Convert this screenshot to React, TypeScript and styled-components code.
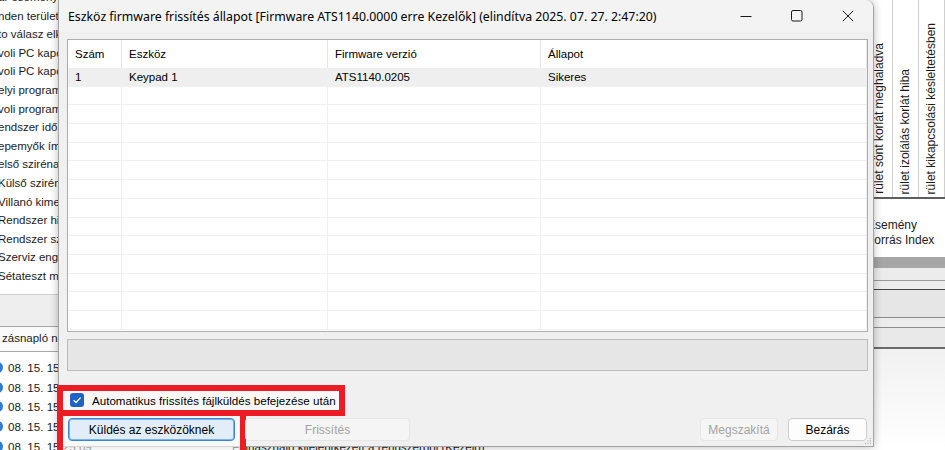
import React from "react";
import styled, { createGlobalStyle } from "styled-components";

const GlobalStyle = createGlobalStyle`
  html, body { margin: 0; padding: 0; }
  body {
    width: 945px; height: 450px; overflow: hidden; background: #fff;
    font-family: "Liberation Sans", Arial, sans-serif; color: #000;
  }
  * { box-sizing: border-box; }
`;

const Stage = styled.div`
  position: relative;
  width: 945px;
  height: 450px;
  overflow: hidden;
  background: #fff;
`;

/* ---------- background application ---------- */
const Backdrop = styled.div`
  display: flex;
  width: 945px;
  height: 450px;
`;

const LeftPane = styled.div`
  width: 600px;
  display: flex;
  flex-direction: column;
`;

const EventList = styled.div`
  height: 295px;
  flex: none;
  overflow: hidden;
  border-bottom: 1px solid #cfcfcf;
`;

const EventRows = styled.div`
  margin-top: -12px;
  margin-left: -2px;
`;

const EventRow = styled.div`
  height: 18.6px;
  line-height: 18.6px;
  font-size: 11.5px;
  color: #1b1b1b;
  white-space: nowrap;
`;

const SplitBand = styled.div`
  height: 31px;
  flex: none;
  background: #eeeeee;
`;

const LogHeader = styled.div`
  height: 26px;
  flex: none;
  border-top: 1px solid #a8a8a8;
  border-bottom: 1px solid #a8a8a8;
  background: #fafafa;
  font-size: 11.5px;
  line-height: 22px;
  padding-left: 2px;
  white-space: nowrap;
  color: #1b1b1b;
`;

const LogRows = styled.div`
  flex: none;
  padding-top: 6px;
`;

const LogRow = styled.div`
  height: 19.6px;
  display: flex;
  align-items: center;
  font-size: 11.6px;
  white-space: nowrap;
  color: #1b1b1b;
`;

const LogIcon = styled.span`
  width: 11px;
  height: 11px;
  border-radius: 50%;
  background: #2f7bd6;
  margin-left: -8px;
  margin-right: 5px;
  flex: none;
`;

const LogDate = styled.span`
  width: 224px;
  flex: none;
`;

const RightPane = styled.div`
  flex: 1;
  display: flex;
  flex-direction: column;
`;

const MatrixHeader = styled.div`
  height: 199px;
  flex: none;
  display: flex;
  justify-content: flex-end;
  border-bottom: 2px solid #5e5e5e;
`;

const VHeader = styled.div`
  width: 26px;
  border-right: 1px solid #cfcfcf;
  display: flex;
  align-items: flex-end;
  justify-content: flex-start;
  padding-left: 5px;
  padding-bottom: 3px;
`;

const VText = styled.span`
  writing-mode: vertical-rl;
  transform: rotate(180deg);
  font-size: 12px;
  line-height: 14px;
  white-space: nowrap;
  color: #1b1b1b;
`;

const Props = styled.div`
  height: 58px;
  flex: none;
  display: flex;
  justify-content: flex-end;
  padding-top: 19px;
`;

const PropsBlock = styled.div`
  width: 78px;
  font-size: 12px;
  line-height: 15px;
  color: #1b1b1b;
  white-space: nowrap;
`;

const Band = styled.div<{ $h: number; $bg: string }>`
  height: ${(p) => p.$h}px;
  background: ${(p) => p.$bg};
  flex: none;
`;

const Fade = styled.div`
  flex: 1;
  background: linear-gradient(#f1f1f1, #ffffff);
`;

/* ---------- dialog window ---------- */
const Dialog = styled.div`
  position: absolute;
  left: 58px;
  top: 0;
  width: 816px;
  height: 447px;
  background: #f0f0f0;
  border: 1px solid #a3a3a3;
  border-top: none;
  border-radius: 0 8px 0 0;
  box-shadow: 0 0 9px rgba(0, 0, 0, 0.28);
  display: flex;
  flex-direction: column;
`;

const TitleBar = styled.div`
  height: 32px;
  display: flex;
  align-items: center;
  background: #f3f3f3;
  border-radius: 0 8px 0 0;
  flex: none;
`;

const Title = styled.div`
  flex: 1;
  padding-left: 9px;
  font-family: "Noto Sans", "Liberation Sans", sans-serif;
  font-size: 12.3px;
  white-space: nowrap;
  overflow: hidden;
`;

const Caption = styled.div`
  width: 51px;
  height: 32px;
  display: flex;
  align-items: center;
  justify-content: center;
`;

const Body = styled.div`
  flex: 1;
  display: flex;
  flex-direction: column;
  padding: 7px 5px 6px 8px;
`;

const Table = styled.div`
  height: 293px;
  background: #fff;
  border: 1px solid #adadad;
  overflow: hidden;
  flex: none;
`;

const cols = "54px 206px 213px 1fr";

const HeadRow = styled.div`
  display: grid;
  grid-template-columns: ${cols};
  height: 28px;
`;

const HeadCell = styled.div`
  border-right: 1px solid #e5e5e5;
  padding-left: 7px;
  display: flex;
  align-items: center;
  font-size: 11.5px;
  white-space: nowrap;
`;

const Row = styled.div<{ $selected?: boolean }>`
  display: grid;
  grid-template-columns: ${cols};
  height: 18.7px;
  background: ${(p) => (p.$selected ? "#efefef" : "#fff")};
  border-bottom: 1px solid #f0f0f0;
`;

const Cell = styled.div`
  border-right: 1px solid #f0f0f0;
  padding-left: 7px;
  display: flex;
  align-items: center;
  font-size: 11.5px;
  white-space: nowrap;
  overflow: hidden;
`;

const Progress = styled.div`
  margin-top: 7px;
  height: 32px;
  background: #e6e6e6;
  border: 1px solid #bcbcbc;
  flex: none;
`;

const CheckRow = styled.label`
  position: relative;
  z-index: 2;
  margin-top: 22px;
  height: 14px;
  display: flex;
  align-items: center;
  gap: 8px;
  padding-left: 3px;
  font-size: 11.6px;
  white-space: nowrap;
`;

const CheckBox = styled.span`
  width: 14px;
  height: 14px;
  border-radius: 3px;
  background: #1f64c2;
  display: flex;
  align-items: center;
  justify-content: center;
  flex: none;
`;

const ButtonRow = styled.div`
  position: relative;
  z-index: 2;
  margin-top: 11px;
  height: 23px;
  display: flex;
  padding: 0 1px;
  gap: 10px;
`;

const Spacer = styled.div`
  flex: 1;
`;

const Button = styled.button<{ $w: number; $variant: "focus" | "normal" | "disabled" }>`
  width: ${(p) => p.$w}px;
  height: 23px;
  border-radius: 4px;
  font-family: "Liberation Sans", Arial, sans-serif;
  font-size: 12px;
  padding: 0;
  color: ${(p) => (p.$variant === "disabled" ? "#a3a3a3" : "#000")};
  background: ${(p) =>
    p.$variant === "focus" ? "#e1eefa" : p.$variant === "normal" ? "#fdfdfd" : "#f5f5f5"};
  border: 1px solid
    ${(p) => (p.$variant === "focus" ? "#3a86d4" : p.$variant === "normal" ? "#cdcdcd" : "#e6e6e6")};
  box-shadow: ${(p) => (p.$variant === "focus" ? "inset 0 0 0 1px #7fb2e5" : "none")};
`;

const Grip = styled.svg`
  position: absolute;
  right: 1px;
  bottom: 1px;
`;

/* ---------- annotation frames ---------- */
const Frame = styled.div<{ $x: number; $y: number; $w: number; $h: number }>`
  position: absolute;
  z-index: 1;
  left: ${(p) => p.$x}px;
  top: ${(p) => p.$y}px;
  width: ${(p) => p.$w}px;
  height: ${(p) => p.$h}px;
  border: 6px solid #ec1c24;
  background: rgba(255, 255, 255, 0.55);
  pointer-events: none;
`;

const events = [
  "ar eseményei",
  "nden terület",
  "to válasz elküldve",
  "voli PC kapcsolat",
  "voli PC kapcsolat",
  "elyi programozás",
  "voli programozás",
  "endszer idő módosítva",
  "epemyők ímeg",
  "első sziréna aktív",
  "Külső sziréna aktív",
  "Villanó kimenet",
  "Rendszer hiba",
  "Rendszer szabotázs",
  "Szerviz engedélyezve",
  "Sétateszt mód",
];

const logs = [
  ["08. 15. 15:32:41", "Kezelő 1 firmware frissítés elindítva a rendszerben"],
  ["08. 15. 15:31:02", "Felhasználó bejelentkezett a rendszerbe (Kezelő 1)"],
  ["08. 15. 15:29:47", "Távoli PC kapcsolat létrejött a központtal"],
  ["08. 15. 15:27:18", "Rendszer idő módosítva a távoli kapcsolaton"],
  ["08. 15. 15:25:09", "Felhasználó kijelentkezett a rendszerből (Kezelő)"],
];

const vheaders = [
  "rület sönt korlát meghaladva",
  "rület izolálás korlát hiba",
  "rület kikapcsolási késleltetésben",
];

const emptyRows = Array.from({ length: 13 });

export default function App() {
  return (
    <>
      <GlobalStyle />
      <Stage>
        <Backdrop>
          <LeftPane>
            <EventList>
              <EventRows>
                {events.map((e, i) => (
                  <EventRow key={i}>{e}</EventRow>
                ))}
              </EventRows>
            </EventList>
            <SplitBand />
            <LogHeader>zásnapló&nbsp;naplózás</LogHeader>
            <LogRows>
              {logs.map(([d, m], i) => (
                <LogRow key={i}>
                  <LogIcon />
                  <LogDate>{d}</LogDate>
                  <span>{m}</span>
                </LogRow>
              ))}
            </LogRows>
          </LeftPane>
          <RightPane>
            <MatrixHeader>
              {vheaders.map((t, i) => (
                <VHeader key={i}>
                  <VText>{t}</VText>
                </VHeader>
              ))}
            </MatrixHeader>
            <Props>
              <PropsBlock>
                <div>Esemény</div>
                <div>Forrás Index</div>
              </PropsBlock>
            </Props>
            <Band $h={11} $bg="#a6a6a6" />
            <Band $h={12} $bg="#ececec" />
            <Band $h={1} $bg="#9a9a9a" />
            <Band $h={8} $bg="#ececec" />
            <Band $h={1} $bg="#444444" />
            <Band $h={27} $bg="#e6e6e6" />
            <Band $h={1} $bg="#8c8c8c" />
            <Band $h={9} $bg="#ececec" />
            <Band $h={1} $bg="#8c8c8c" />
            <Band $h={19} $bg="#e9e9e9" />
            <Band $h={2} $bg="#6a6a6a" />
            <Fade />
          </RightPane>
        </Backdrop>

        <Frame $x={57} $y={385} $w={288} $h={31} />
        <Frame $x={57} $y={410} $w={189} $h={50} />

        <Dialog>
          <TitleBar>
            <Title>
              Eszköz firmware frissítés állapot [Firmware ATS1140.0000 erre Kezelők] (elindítva 2025. 07. 27. 2:47:20)
            </Title>
            <Caption>
              <svg width="14" height="14" viewBox="0 0 14 14">
                <path d="M1.5 7.5h11" stroke="#1a1a1a" strokeWidth="1" />
              </svg>
            </Caption>
            <Caption>
              <svg width="12" height="12" viewBox="0 0 12 12">
                <rect x="0.5" y="0.5" width="10.5" height="10.5" rx="1.5" fill="none" stroke="#1a1a1a" strokeWidth="1" />
              </svg>
            </Caption>
            <Caption>
              <svg width="12" height="12" viewBox="0 0 12 12">
                <path d="M0.8 0.8L11.2 11.2M11.2 0.8L0.8 11.2" stroke="#1a1a1a" strokeWidth="1" />
              </svg>
            </Caption>
          </TitleBar>
          <Body>
            <Table>
              <HeadRow>
                <HeadCell>Szám</HeadCell>
                <HeadCell>Eszköz</HeadCell>
                <HeadCell>Firmware verzió</HeadCell>
                <HeadCell>Állapot</HeadCell>
              </HeadRow>
              <Row $selected>
                <Cell>1</Cell>
                <Cell>Keypad 1</Cell>
                <Cell>ATS1140.0205</Cell>
                <Cell>Sikeres</Cell>
              </Row>
              {emptyRows.map((_, i) => (
                <Row key={i}>
                  <Cell />
                  <Cell />
                  <Cell />
                  <Cell />
                </Row>
              ))}
            </Table>
            <Progress />
            <CheckRow>
              <CheckBox>
                <svg width="10" height="10" viewBox="0 0 10 10">
                  <path d="M1.6 5.2L4 7.5L8.6 2.6" fill="none" stroke="#fff" strokeWidth="1.3" />
                </svg>
              </CheckBox>
              Automatikus frissítés fájlküldés befejezése után
            </CheckRow>
            <ButtonRow>
              <Button $w={167} $variant="focus">Küldés az eszközöknek</Button>
              <Button $w={165} $variant="disabled">Frissítés</Button>
              <Spacer />
              <Button $w={78} $variant="disabled">Megszakítá</Button>
              <Button $w={79} $variant="normal">Bezárás</Button>
            </ButtonRow>
          </Body>
          <Grip width="8" height="8" viewBox="0 0 8 8">
            <circle cx="6.5" cy="1.5" r="0.7" fill="#b5b5b5" />
            <circle cx="4" cy="4" r="0.7" fill="#b5b5b5" />
            <circle cx="6.5" cy="4" r="0.7" fill="#b5b5b5" />
            <circle cx="1.5" cy="6.5" r="0.7" fill="#b5b5b5" />
            <circle cx="4" cy="6.5" r="0.7" fill="#b5b5b5" />
            <circle cx="6.5" cy="6.5" r="0.7" fill="#b5b5b5" />
          </Grip>
        </Dialog>
      </Stage>
    </>
  );
}
